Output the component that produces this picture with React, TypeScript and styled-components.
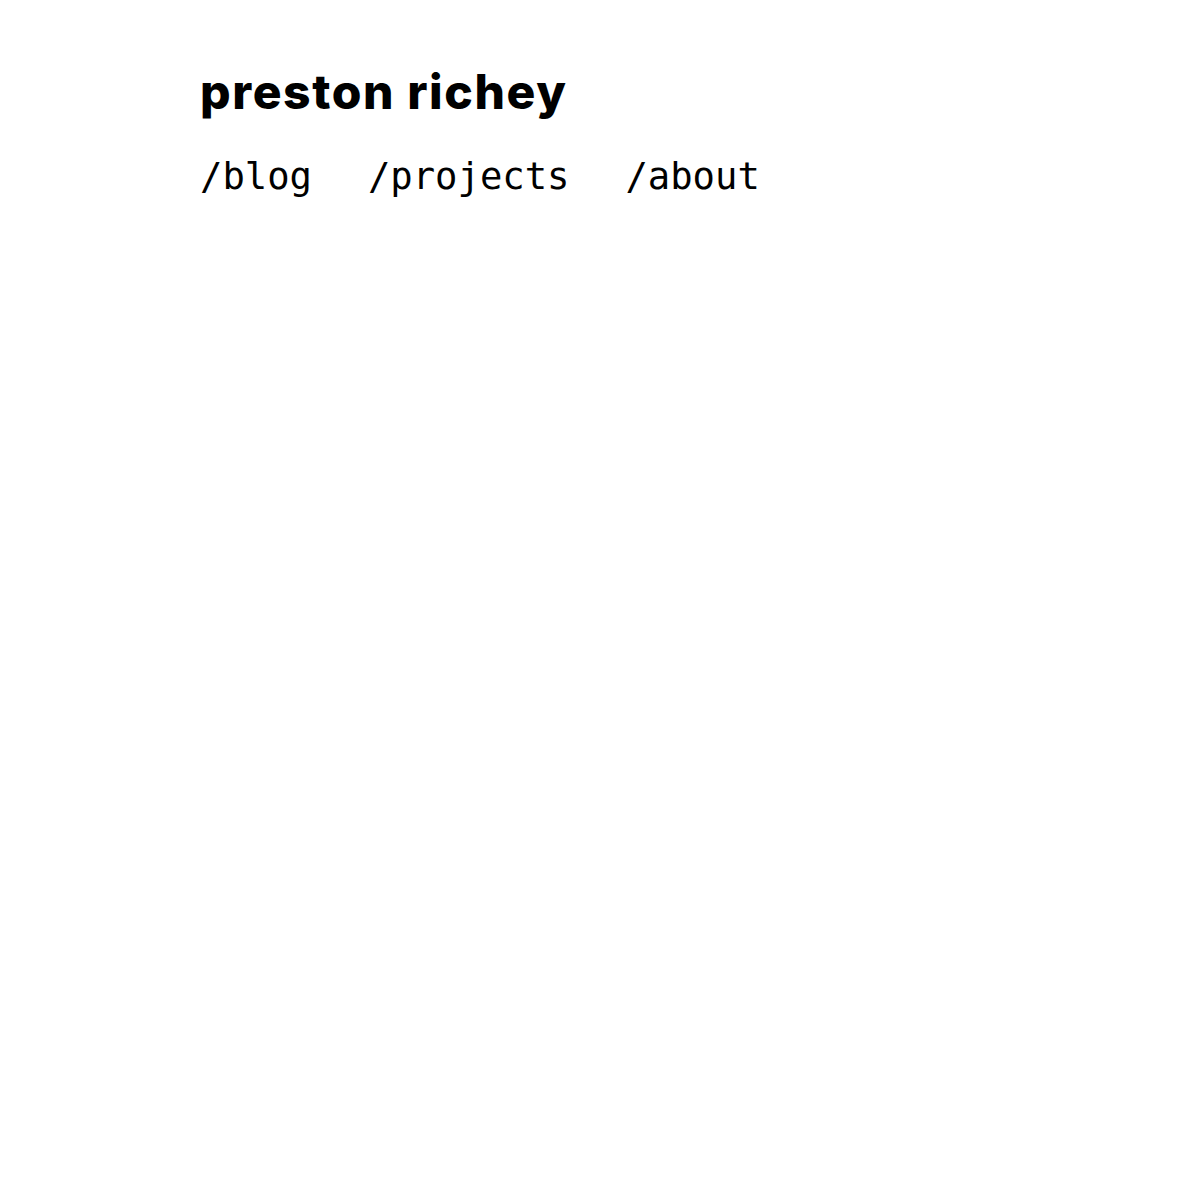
import styled, { createGlobalStyle } from "styled-components";

const GlobalStyle = createGlobalStyle`
  html, body {
    margin: 0;
    padding: 0;
    background: #fff;
    color: #000;
  }
`;

const Page = styled.div`
  max-width: 800px;
  margin: 0 auto;
  padding-top: 62px;
`;

const Title = styled.h1`
  margin: 0;
  font-family: Inter, "Noto Sans", sans-serif;
  font-weight: 800;
  font-size: 48px;
  letter-spacing: 1.6px;
  line-height: 60px;
`;

const Nav = styled.nav`
  display: flex;
  gap: 56px;
  margin-top: 30px;
`;

const NavLink = styled.a`
  font-family: "DejaVu Sans Mono", "Liberation Mono", monospace;
  font-size: 37.2px;
  color: #000;
  text-decoration: none;
  line-height: 48px;
`;

const links = ["/blog", "/projects", "/about"];

export default function App() {
  return (
    <>
      <GlobalStyle />
      <Page>
        <Title>preston richey</Title>
        <Nav>
          {links.map((l) => (
            <NavLink key={l} href={l}>
              {l}
            </NavLink>
          ))}
        </Nav>
      </Page>
    </>
  );
}
